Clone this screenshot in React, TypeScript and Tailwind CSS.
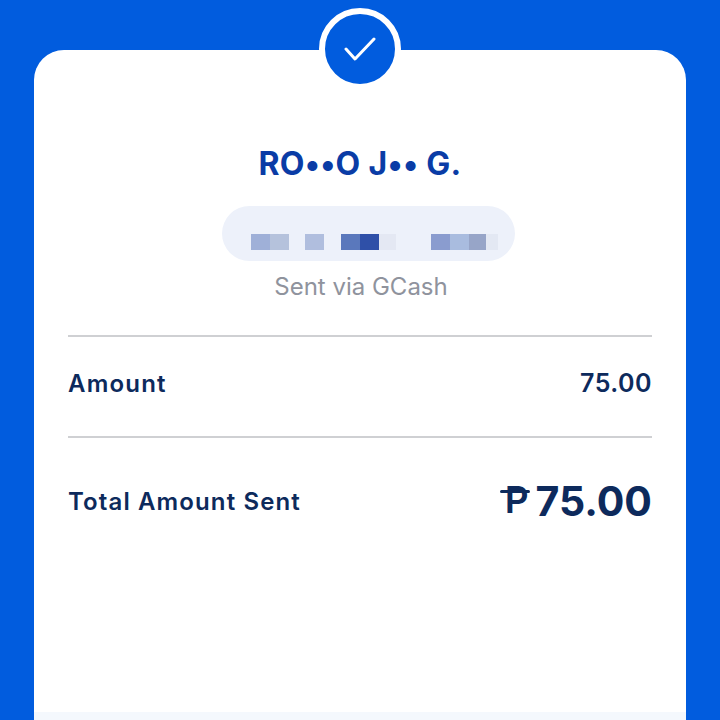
export default function App() {
  const blocks = [
    ["w-[19px]", "bg-[#9fb0d8]"],
    ["w-[19px]", "bg-[#b5c2dc]"],
    ["w-[16px]", ""],
    ["w-[19px]", "bg-[#b0bede]"],
    ["w-[17px]", ""],
    ["w-[19px]", "bg-[#5a78bc]"],
    ["w-[19px]", "bg-[#2f50a8]"],
    ["w-[17px]", "bg-[#e4e8f3]"],
    ["w-[35px]", ""],
    ["w-[19px]", "bg-[#8a9ccf]"],
    ["w-[19px]", "bg-[#a9bcdf]"],
    ["w-[17px]", "bg-[#97a5c8]"],
    ["w-[12px]", "bg-[#e3e8f3]"],
  ];
  return (
    <div className="h-[720px] w-[720px] overflow-hidden bg-[#015cde] px-[34px] pt-[50px] font-['Inter',sans-serif]">
      <div className="relative flex h-[670px] flex-col rounded-t-[30px] bg-white">
        <div className="absolute left-[285px] top-[-42px] flex h-[82px] w-[82px] items-center justify-center rounded-full border-[6px] border-white bg-[#015cde]">
          <svg width="32" height="24" viewBox="0 0 32 24" fill="none" stroke="white" strokeWidth="3" strokeLinecap="round" strokeLinejoin="round">
            <path d="M2 12 L11 22 L30 2" />
          </svg>
        </div>
        <div className="flex flex-col items-center pt-[94px]">
          <div className="text-[32px] font-bold leading-[40px] tracking-[0.3px] text-[#0a3ca6]">RO••O J•• G.</div>
          <div className="ml-[17px] mt-[22px] flex h-[55px] w-[293px] items-center rounded-[28px] bg-[#edf1fa] pl-[29px] pt-[17px]">
            {blocks.map(([w, c], i) => (
              <div key={i} className={`h-[16px] blur-[0.4px] ${w} ${c}`} />
            ))}
          </div>
          <div className="ml-[2px] mt-[10px] text-[24px] leading-[32px] text-[#8f939d]">Sent via GCash</div>
        </div>
        <div className="mx-[34px] mt-[32px] flex h-[103px] items-center justify-between border-y-2 border-[#cfd0d3] pb-[6px] text-[#0d2a5c]">
          <span className="text-[24px] font-semibold tracking-[1.2px]">Amount</span>
          <span className="text-[25px] font-semibold tracking-[0.5px]">75.00</span>
        </div>
        <div className="mx-[34px] mt-[35px] flex items-center justify-between text-[#0d2a5c]">
          <span className="text-[24px] font-semibold tracking-[1.12px]">Total Amount Sent</span>
          <span className="flex items-baseline text-[41px] font-bold leading-[56px]">
            <span className="relative mr-[7px] -translate-y-[3px] pl-[5px] text-[37px] font-semibold leading-[56px]">
              P
              <span className="absolute left-0 top-[18px] h-[3px] w-[30px] rounded-full bg-[#0d2a5c]" />
            </span>
            75.00
          </span>
        </div>
        <div className="mt-auto h-[8px] bg-[#f4f8fd]" />
      </div>
    </div>
  );
}
